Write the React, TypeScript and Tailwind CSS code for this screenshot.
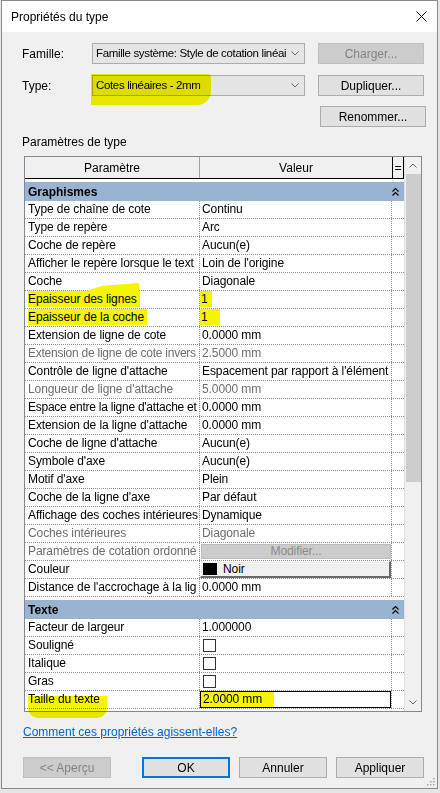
import React from 'react';

type Row = {
  p: string;
  v?: string;
  dim?: boolean;
  hl?: boolean;
  tight?: boolean;
  kind?: 'text' | 'check' | 'color' | 'button' | 'edit';
};

const graphismes: Row[] = [
  { p: 'Type de chaîne de cote', v: 'Continu' },
  { p: 'Type de repère', v: 'Arc' },
  { p: 'Coche de repère', v: 'Aucun(e)' },
  { p: 'Afficher le repère lorsque le text', v: "Loin de l'origine" },
  { p: 'Coche', v: 'Diagonale' },
  { p: 'Epaisseur des lignes', v: '1', hl: true },
  { p: 'Epaisseur de la coche', v: '1', hl: true },
  { p: 'Extension de ligne de cote', v: '0.0000 mm' },
  { p: 'Extension de ligne de cote invers', v: '2.5000 mm', dim: true, tight: true },
  { p: "Contrôle de ligne d'attache", v: "Espacement par rapport à l'élément" },
  { p: "Longueur de ligne d'attache", v: '5.0000 mm', dim: true },
  { p: "Espace entre la ligne d'attache et", v: '0.0000 mm', tight: true },
  { p: "Extension de la ligne d'attache", v: '0.0000 mm' },
  { p: "Coche de ligne d'attache", v: 'Aucun(e)' },
  { p: "Symbole d'axe", v: 'Aucun(e)' },
  { p: "Motif d'axe", v: 'Plein' },
  { p: "Coche de la ligne d'axe", v: 'Par défaut' },
  { p: 'Affichage des coches intérieures', v: 'Dynamique' },
  { p: 'Coches intérieures', v: 'Diagonale', dim: true },
  { p: 'Paramètres de cotation ordonné', kind: 'button', dim: true },
  { p: 'Couleur', kind: 'color' },
  { p: "Distance de l'accrochage à la lig", v: '0.0000 mm' },
];

const texte: Row[] = [
  { p: 'Facteur de largeur', v: '1.000000' },
  { p: 'Souligné', kind: 'check' },
  { p: 'Italique', kind: 'check' },
  { p: 'Gras', kind: 'check' },
  { p: 'Taille du texte', v: '2.0000 mm', kind: 'edit' },
];

const Chevron = ({ up = false, color = '#606060' }: { up?: boolean; color?: string }) => (
  <svg width="8" height="5" viewBox="0 0 8 5" className="block shrink-0">
    <polyline
      points={up ? '0.5,4.5 4,1 7.5,4.5' : '0.5,0.5 4,4 7.5,0.5'}
      fill="none"
      stroke={color}
      strokeWidth="1"
    />
  </svg>
);

const DoubleUp = () => (
  <svg width="7" height="8" viewBox="0 0 7 8" className="block">
    <polyline points="0.5,3.5 3.5,0.5 6.5,3.5" fill="none" stroke="#000" strokeWidth="1.2" />
    <polyline points="0.5,7.5 3.5,4.5 6.5,7.5" fill="none" stroke="#000" strokeWidth="1.2" />
  </svg>
);

const GroupRow = ({ label }: { label: string }) => (
  <div className="pt-[3px] bg-white">
    <div className="flex h-[19px] items-center justify-between bg-[#99b4d1] pl-[3px] pr-[5px]">
      <span className="font-bold">{label}</span>
      <DoubleUp />
    </div>
  </div>
);

const ValueCell = ({ r, idx }: { r: Row; idx: number }) => {
  if (r.kind === 'check') {
    return (
      <div className="flex h-full items-center pl-[3px]">
        <div className="h-[13px] w-[13px] border border-[#333] bg-white" />
      </div>
    );
  }
  if (r.kind === 'button') {
    return (
      <div className="flex h-full items-start pt-[1px] pl-[1px]">
        <div className="flex h-[15px] w-[190px] items-center justify-center border border-[#bdbdbd] bg-[#cccccc] text-[#8a8a8a]">
          Modifier...
        </div>
      </div>
    );
  }
  if (r.kind === 'color') {
    return (
      <div className="flex h-full items-center gap-[6px] border-t border-l border-white border-r-2 border-b-2 border-r-[#6a6a6a] border-b-[#6a6a6a] bg-[#f0f0f0] pl-[2px]">
        <div className="h-[12px] w-[14px] bg-black" />
        <span>Noir</span>
      </div>
    );
  }
  if (r.kind === 'edit') {
    return (
      <div className="relative h-full border border-black bg-white pl-[2px] leading-[15px]">
        <div className="absolute left-[0px] top-[0px] h-[20px] w-[73px] rounded-br-[8px] bg-[#f5f500] mix-blend-multiply" />
        <span className="relative">{r.v}</span>
      </div>
    );
  }
  if (r.hl) {
    return (
      <div className="h-full">
        <span
          className={`inline-block h-[16px] bg-[#f5f500] pl-[1px] leading-[17px] ${idx === 6 ? 'w-[20px]' : 'w-[12px]'}`}
        >
          {r.v}
        </span>
      </div>
    );
  }
  return <div className="pl-[2px]">{r.v}</div>;
};

const PropRow = ({ r, idx }: { r: Row; idx: number }) => (
  <div className="relative flex h-[18px] border-b border-dotted border-[#8c8c8c]">
    {r.p === 'Taille du texte' && (
      <div className="absolute left-[3px] top-[5px] h-[22px] w-[79px] rounded-b-[10px] bg-[#f5f500] mix-blend-multiply" />
    )}
    {r.p === 'Epaisseur des lignes' && (
      <div className="absolute left-[58px] top-[-8px] h-[9px] w-[56px] bg-[#f5f500] [clip-path:polygon(0_100%,35%_30%,100%_0,100%_100%)]" />
    )}
    <div
      className={`relative w-[175px] shrink-0 overflow-hidden whitespace-nowrap border-r border-dotted border-[#8c8c8c] pl-[3px] leading-[17px] ${
        r.tight ? 'tracking-[-0.25px]' : 'tracking-[-0.1px]'
      } ${r.dim ? 'text-[#6d6d6d]' : 'text-black'}`}
    >
      {r.hl ? <span className="inline-block h-[16px] bg-[#f5f500] pr-[3px]">{r.p}</span> : r.p}
    </div>
    <div
      className={`relative w-[192px] shrink-0 overflow-hidden whitespace-nowrap border-r border-dotted border-[#8c8c8c] leading-[17px] tracking-[-0.1px] ${
        r.dim ? 'text-[#6d6d6d]' : 'text-black'
      }`}
    >
      <ValueCell r={r} idx={idx} />
    </div>
    <div className="w-[12px] shrink-0 bg-white" />
  </div>
);

const WinButton = ({ label, disabled, primary, w = 'w-[88px]' }: { label: string; disabled?: boolean; primary?: boolean; w?: string }) => (
  <div
    className={`flex h-[21px] ${w} items-center justify-center ${
      disabled
        ? 'border border-[#bfbfbf] bg-[#cccccc] text-[#838383]'
        : primary
        ? 'border-2 border-[#0078d7] bg-[#e1e1e1] text-black'
        : 'border border-[#adadad] bg-[#e1e1e1] text-black'
    }`}
  >
    {label}
  </div>
);

const Combo = ({ text }: { text: string }) => (
  <div className="flex h-[21px] w-[213px] items-center gap-[2px] border border-[#acacac] bg-[#e5e5e5] pl-[3px] pr-[5px]">
    <span className="relative flex-1 overflow-hidden whitespace-nowrap text-[11.5px] tracking-[-0.35px]">{text}</span>
    <Chevron color="#6a6a6a" />
  </div>
);

export default function App() {
  return (
    <div className="min-h-screen bg-[#e6e6e6] font-['Liberation_Sans',Arial,sans-serif] text-[12px] text-black">
      <div className="ml-[1px] flex h-[789px] w-[437px] flex-col border border-[#8a8a8a] bg-[#f0f0f0]">
        {/* Title bar */}
        <div className="flex h-[31px] items-center justify-between bg-white pl-[9px] pr-[9px]">
          <span>Propriétés du type</span>
          <svg width="11" height="11" viewBox="0 0 11 11" className="mr-[1px]">
            <line x1="0.5" y1="0.5" x2="10.5" y2="10.5" stroke="#000" strokeWidth="1" />
            <line x1="10.5" y1="0.5" x2="0.5" y2="10.5" stroke="#000" strokeWidth="1" />
          </svg>
        </div>

        <div className="relative flex flex-1 flex-col pl-[20px] pt-[11px]">
          {/* Famille */}
          <div className="flex h-[21px] items-center">
            <span className="w-[70px]">Famille:</span>
            <Combo text="Famille système: Style de cotation linéai" />
            <div className="ml-[13px]">
              <WinButton label="Charger..." disabled w="w-[106px]" />
            </div>
          </div>
          {/* Type */}
          <div className="relative mt-[11px] flex h-[21px] items-center">
            <span className="w-[70px]">Type:</span>
            <div className="relative">
              <Combo text="Cotes linéaires - 2mm" />
              <div className="absolute left-[-1px] top-[-1px] h-[31px] w-[120px] rounded-br-[14px] rounded-tr-[4px] bg-[#f5f500] mix-blend-multiply" />
            </div>
            <div className="ml-[13px]">
              <WinButton label="Dupliquer..." w="w-[106px]" />
            </div>
          </div>
          {/* Renommer */}
          <div className="mt-[10px] flex h-[21px] justify-end pr-[11px]">
            <WinButton label="Renommer..." w="w-[106px]" />
          </div>

          <div className="mt-[8px] h-[14px] leading-[14px]">Paramètres de type</div>

          {/* Property grid */}
          <div className="ml-[2px] mt-[7px] flex h-[556px] w-[398px] border border-[#828790] bg-white">
            <div className="flex w-[379px] flex-col">
              <div className="flex h-[22px] border-b border-black bg-[#f0f0f0]">
                <div className="flex w-[175px] items-center justify-center border-r border-[#a0a0a0]">Paramètre</div>
                <div className="flex w-[192px] items-center justify-center">Valeur</div>
                <div className="flex w-[12px] items-center justify-center border-x border-black leading-none">=</div>
              </div>
              <GroupRow label="Graphismes" />
              {graphismes.map((r, i) => (
                <PropRow key={r.p} r={r} idx={i} />
              ))}
              <GroupRow label="Texte" />
              {texte.map((r, i) => (
                <PropRow key={r.p} r={r} idx={i} />
              ))}
            </div>
            {/* Scrollbar */}
            <div className="flex w-[17px] flex-col border-l border-[#e0e0e0] bg-[#f0f0f0]">
              <div className="flex h-[17px] items-center justify-center">
                <Chevron up />
              </div>
              <div className="ml-[1px] h-[308px] w-[15px] bg-[#cdcdcd]" />
              <div className="flex-1" />
              <div className="flex h-[17px] items-center justify-center">
                <Chevron />
              </div>
            </div>
          </div>

          <div className="ml-[1px] mt-[13px] h-[14px] leading-[14px] text-[#0066cc] underline">
            Comment ces propriétés agissent-elles?
          </div>

          <div className="ml-[1px] mt-[18px] flex w-[401px] items-center justify-between">
            <WinButton label="<< Aperçu" disabled />
            <div className="flex gap-[9px]">
              <WinButton label="OK" primary />
              <WinButton label="Annuler" />
              <WinButton label="Appliquer" />
            </div>
          </div>

          {/* Resize grip */}
          <svg width="8" height="8" viewBox="0 0 8 8" className="absolute bottom-[2px] right-[2px]">
            <rect x="6" y="0" width="1.5" height="1.5" fill="#a8a8a8" />
            <rect x="3" y="3" width="1.5" height="1.5" fill="#a8a8a8" />
            <rect x="6" y="3" width="1.5" height="1.5" fill="#a8a8a8" />
            <rect x="0" y="6" width="1.5" height="1.5" fill="#a8a8a8" />
            <rect x="3" y="6" width="1.5" height="1.5" fill="#a8a8a8" />
            <rect x="6" y="6" width="1.5" height="1.5" fill="#a8a8a8" />
          </svg>
        </div>
      </div>
    </div>
  );
}
